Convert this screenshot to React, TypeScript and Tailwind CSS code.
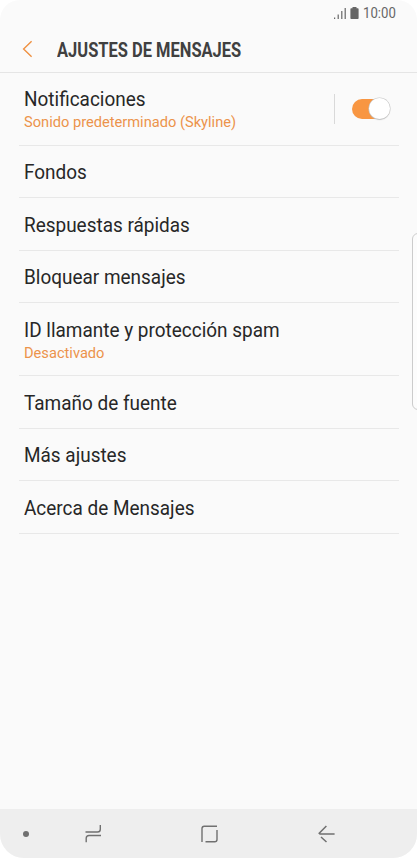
type Setting = {
  title: string
  detail?: string
  hasSwitch?: boolean
}

const settings: Setting[] = [
  { title: 'Notificaciones', detail: 'Sonido predeterminado (Skyline)', hasSwitch: true },
  { title: 'Fondos' },
  { title: 'Respuestas rápidas' },
  { title: 'Bloquear mensajes' },
  { title: 'ID llamante y protección spam', detail: 'Desactivado' },
  { title: 'Tamaño de fuente' },
  { title: 'Más ajustes' },
  { title: 'Acerca de Mensajes' },
]

function StatusBar() {
  return (
    <div className="flex h-[26px] shrink-0 items-center justify-end pr-[21px] text-[#666]">
      <svg width="13" height="12" viewBox="0 0 13 12" fill="currentColor">
        <rect x="0" y="10.5" width="1.2" height="1.5" />
        <rect x="3.6" y="7.5" width="1.2" height="4.5" />
        <rect x="7.2" y="4" width="1.2" height="8" />
        <rect x="10.6" y="1" width="1.2" height="11" />
      </svg>
      <svg className="ml-[3px]" width="9" height="12" viewBox="0 0 9 12" fill="currentColor">
        <path d="M2.5 0h4v1.2h1.3q.8 0 .8.8v9.2q0 .8-.8.8H1.2q-.8 0-.8-.8V2q0-.8.8-.8h1.3z" />
      </svg>
      <span className="ml-1 inline-block w-[33px] origin-left scale-x-[0.85] pt-0.5 text-[15.5px] leading-none whitespace-nowrap">10:00</span>
    </div>
  )
}

function Header() {
  return (
    <header className="flex h-[47px] shrink-0 items-center border-b border-[#e5e5e5] pl-[22px]">
      <svg width="11" height="18" viewBox="0 0 11 18" fill="none" stroke="#ef9142" strokeWidth="1.4">
        <path d="M9.6 1.2 1.6 9l8 7.8" />
      </svg>
      <h1 className="ml-6 origin-left scale-x-[0.845] pt-[3px] text-[19.5px] font-bold whitespace-nowrap text-[#404040]">AJUSTES DE MENSAJES</h1>
    </header>
  )
}

function Switch() {
  return (
    <div className="flex items-center">
      <div className="h-[30px] w-px bg-[#d9d9d9]" />
      <div className="ml-[17px] flex h-5 w-[38px] items-center justify-end rounded-full bg-[#f89642] pr-[0.5px]">
        <div className="size-[21px] shrink-0 rounded-full bg-white shadow-[0_0_0_0.5px_#c8c8c8,0_1px_1px_#bbb]" />
      </div>
    </div>
  )
}

function SettingRow({ setting }: { setting: Setting }) {
  const height = setting.detail ? 'h-[72.8px]' : 'h-[52.6px]'
  return (
    <li className={`flex items-center justify-between border-b border-[#e8e8e8] pr-[9px] pl-[5.5px] ${height}`}>
      <div className="pt-[3.5px] text-[19.5px] leading-[24px] text-[#272727]">
        <div className="origin-left scale-x-[0.972] whitespace-nowrap">{setting.title}</div>
        {setting.detail && <div className="text-[14.65px] leading-[21px] text-[#ec934b]">{setting.detail}</div>}
      </div>
      {setting.hasSwitch && <Switch />}
    </li>
  )
}

function NavBar() {
  return (
    <nav className="flex h-[49px] shrink-0 items-center bg-[#eee] pl-[23px] text-[#707070]">
      <div className="size-1.5 rounded-full bg-current" />
      <svg className="ml-[56px]" width="17" height="19" viewBox="0 0 17 19" fill="none" stroke="currentColor" strokeWidth="1.4">
        <path d="M.5 8h12q2.8 0 2.8-2.8V1M16 11.5H4q-2.8 0-2.8 2.8v4" />
      </svg>
      <svg className="ml-[99px]" width="17" height="18" viewBox="0 0 17 18" fill="none" stroke="currentColor" strokeWidth="1.4">
        <path d="M1 17V3.5Q1 1.2 3.3 1.2H16M16 5v9.5q0 2.3-2.3 2.3H4.5" />
      </svg>
      <svg className="ml-[100px]" width="17" height="18" viewBox="0 0 17 18" fill="none" stroke="currentColor" strokeWidth="1.5">
        <path d="M8.4 1 1.2 8.3l.8.8h14.6M3 12l5.5 5" />
      </svg>
    </nav>
  )
}

export default function App() {
  return (
    <div className="h-[858px] w-[417px] bg-white font-[Roboto,sans-serif]">
      <div className="relative flex h-full flex-col overflow-hidden rounded-t-[20px] rounded-b-[24px] bg-[#fafafa]">
        <StatusBar />
        <Header />
        <ul className="-mt-[0.15px] mr-[18px] ml-[18.5px] flex-1">
          {settings.map((setting) => (
            <SettingRow key={setting.title} setting={setting} />
          ))}
        </ul>
        <NavBar />
        {/* Edge panel handle */}
        <div className="absolute top-[233px] -right-2 h-[177px] w-[13px] rounded-[6px] border border-[#ccc] bg-[#fcfcfc]" />
      </div>
    </div>
  )
}
